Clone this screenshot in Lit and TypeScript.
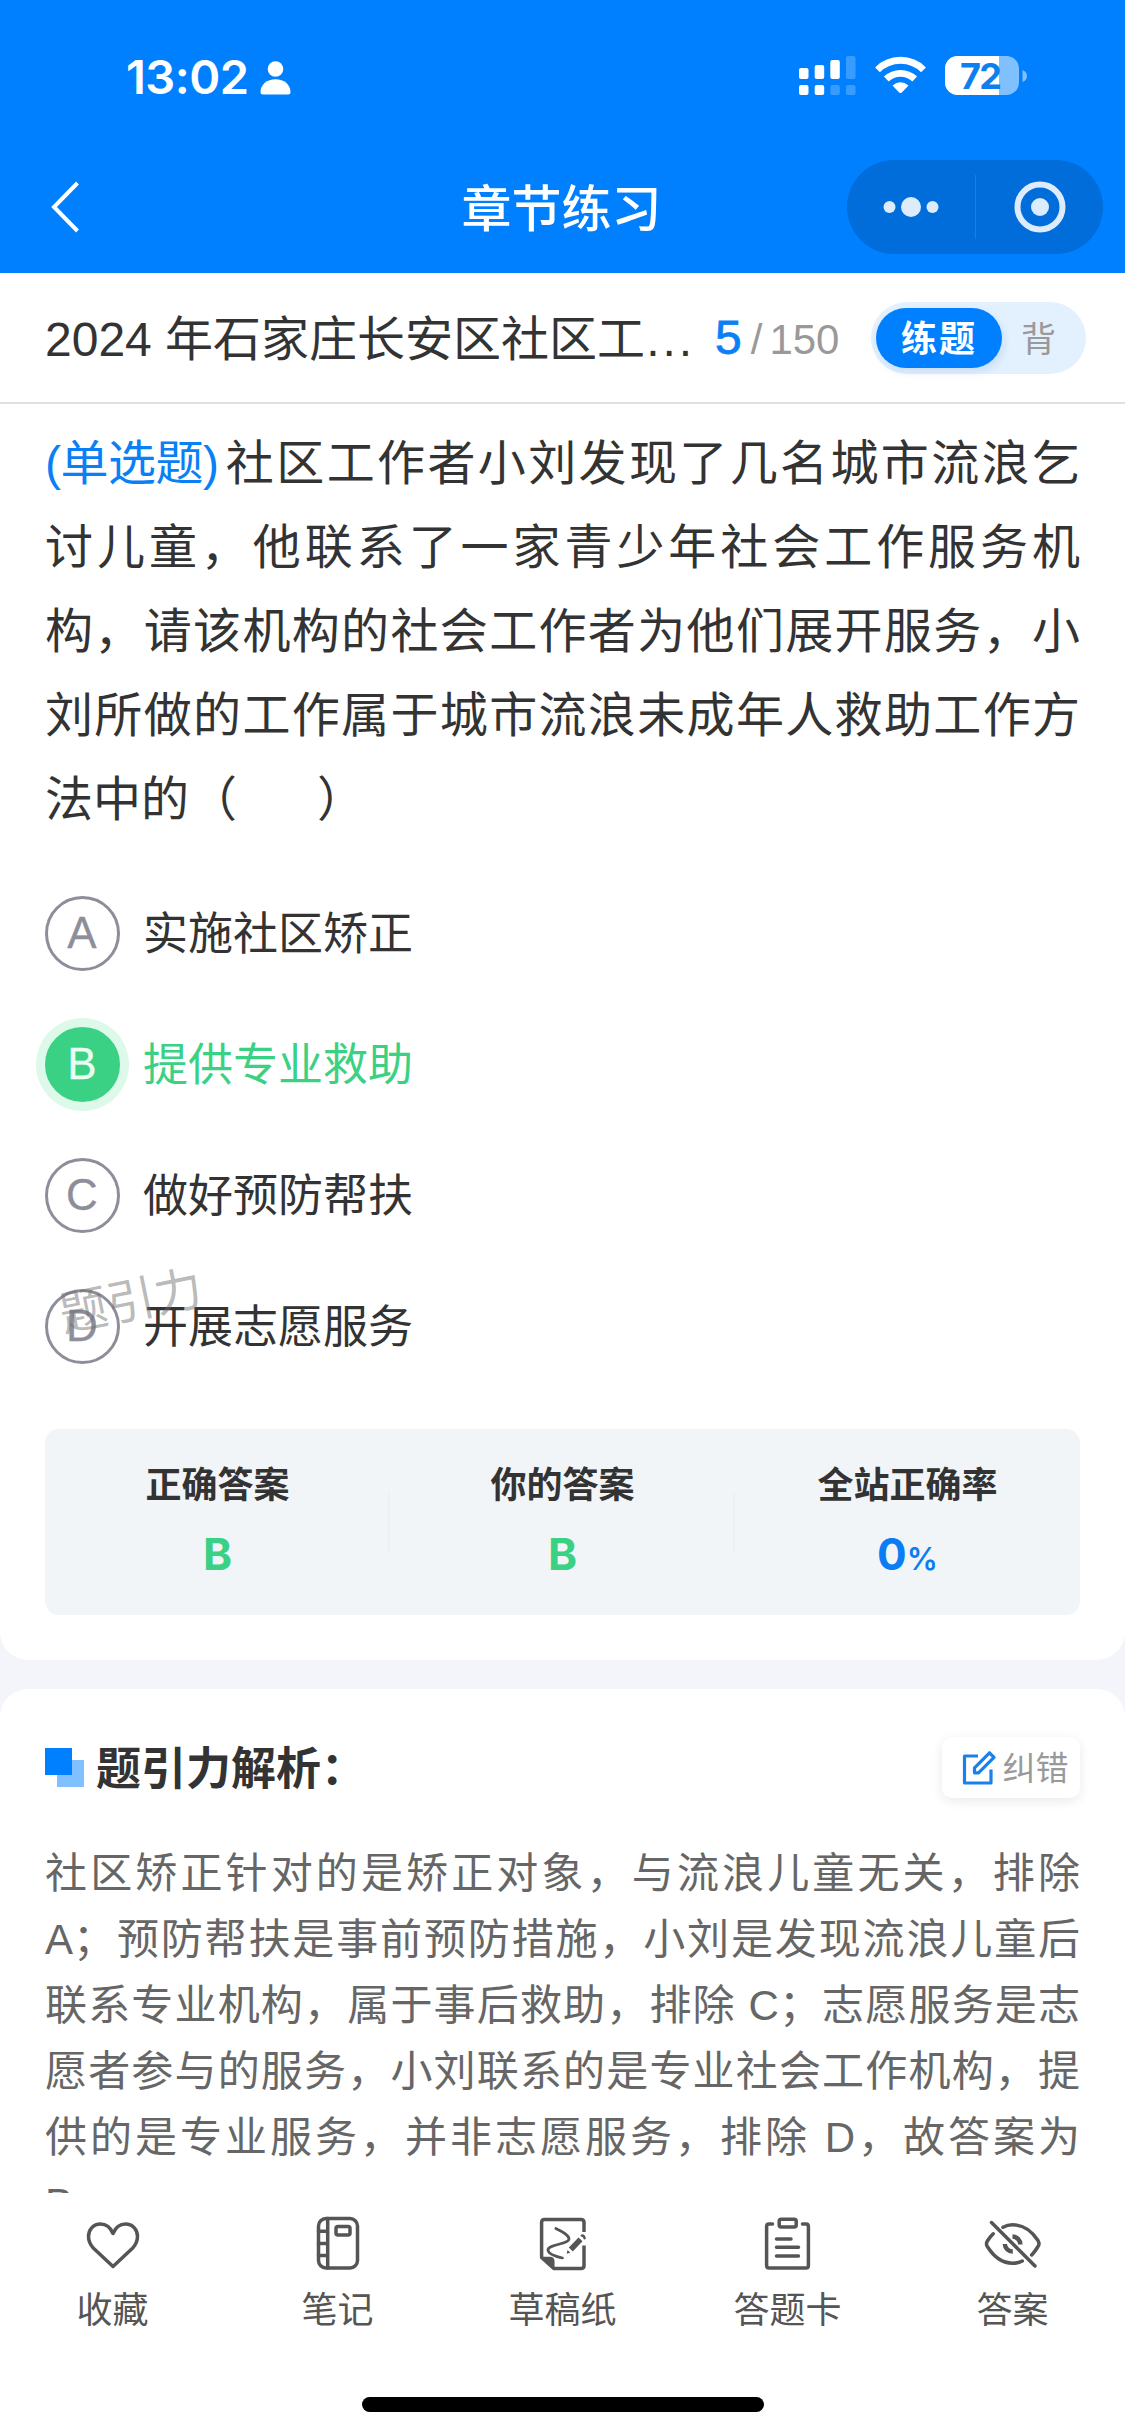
import { LitElement, html, css, svg } from "lit";
import { customElement, property } from "lit/decorators.js";
import { classMap } from "lit/directives/class-map.js";

const STEM_LINES = [
  "社区工作者小刘发现了几名城市流浪乞",
  "讨儿童，他联系了一家青少年社会工作服务机",
  "构，请该机构的社会工作者为他们展开服务，小",
  "刘所做的工作属于城市流浪未成年人救助工作方",
  "法中的（\u00a0\u00a0\u00a0\u00a0\u00a0\u00a0）",
];

const OPTIONS = [
  { key: "A", text: "实施社区矫正" },
  { key: "B", text: "提供专业救助", picked: true },
  { key: "C", text: "做好预防帮扶" },
  { key: "D", text: "开展志愿服务" },
];

const ANALYSIS_LINES = [
  "社区矫正针对的是矫正对象，与流浪儿童无关，排除",
  "A；预防帮扶是事前预防措施，小刘是发现流浪儿童后",
  "联系专业机构，属于事后救助，排除 C；志愿服务是志",
  "愿者参与的服务，小刘联系的是专业社会工作机构，提",
  "供的是专业服务，并非志愿服务，排除 D，故答案为",
  "B。",
];

const ICONS = {
  heart: svg`<path d="M30 19.5C27.5 13.5 23 10 17.5 10C10.5 10 5.5 15.5 5.5 22.5C5.5 27.5 7.5 31 10.5 34.3L30 52.5L49.5 34.3C52.5 31 54.5 27.5 54.5 22.5C54.5 15.5 49.5 10 42.5 10C37 10 32.5 13.5 30 19.5Z"/>`,
  note: svg`<rect x="10.5" y="4.5" width="39" height="49.5" rx="7.5"/><path d="M19.7 4.5V54M10.5 17.2H19.7M10.5 29.5H19.7M10.5 41.5H19.7"/><rect x="28" y="12.500" width="14" height="8.500" rx="2"/>`,
  draft: svg`<path class="flat" d="M51 18V8.500Q51 5.500 48 5.500H11.500Q8.600 5.500 8.600 8.500V43.500L20.800 54.500H48Q51 54.500 51 51.500V31.500"/><path class="solid" d="M8.600 43.500H17Q20.800 43.500 20.800 47.500V54.500Z"/><path class="thin" d="M22.800 14.500C29 17.500 36 21 36 25C36 30 15 30.500 15 36C15 39.500 23 42.500 29.500 44"/><path class="pen" d="M37.800 35.500L47.500 25.300"/><path class="fill" d="M33.700 39.800L34.500 36L37.300 38.700Z"/><path class="cap" d="M48.800 21.600Q51 21.300 51.600 24.200"/>`,
  card: svg`<path d="M14.500 10H11Q8.600 10 8.600 12.500V51.500Q8.600 54 11 54H48Q50.400 54 50.400 51.500V12.500Q50.400 10 48 10H44.500"/><rect x="21.200" y="5.200" width="17" height="7.800" rx="2"/><path d="M18.500 25H33M18.500 33.300H40.500M18.500 42H40.500"/>`,
  eye: svg`<path d="M8.500 8.500L52 52M20 13.300Q24.500 10.800 29.500 10.800C43 10.800 50 19 55 26.500Q57 30 55 32.500Q52 37.500 48.700 41M10.200 19.800Q7 23 4.500 26.800Q2.500 30 4.500 32.800C10 41.500 17.500 49.200 29.500 49.200Q35 49.200 39.300 47"/><path class="pupil" d="M29.500 22.500A8 8 0 0 1 37.300 30.500M21.800 30A8 8 0 0 0 29.800 37.600"/>`,
};

const TOOLS: { icon: keyof typeof ICONS; label: string }[] = [
  { icon: "heart", label: "收藏" },
  { icon: "note", label: "笔记" },
  { icon: "draft", label: "草稿纸" },
  { icon: "card", label: "答题卡" },
  { icon: "eye", label: "答案" },
];

@customElement("status-bar")
class StatusBar extends LitElement {
  static styles = css`
    :host { display: flex; justify-content: space-between; height: 111px; padding: 39px 96px 0 127px; box-sizing: border-box; color: #fff; }
    .left { display: flex; align-items: center; gap: 11px; height: 76px; }
    .time { font: 600 47px/76px Inter, sans-serif; letter-spacing: -0.5px; margin-left: -1px; }
    .icons { display: block; margin-top: 14px; }
    .person { margin-top: 1px; }
    .level { font: 700 36px Inter, sans-serif; fill: #0d80ee; }
  `;
  render() {
    return html`
      <div class="left">
        <span class="time">13:02</span>
        <svg class="person" width="31" height="34" viewBox="0 0 31 34" fill="#fff">
          <circle cx="15.5" cy="8" r="7.8" />
          <path d="M0.5 31C0.5 23.500 7 18.200 15.500 18.200S30.500 23.500 30.500 31Q30.500 33.500 28 33.500H3Q0.500 33.500 0.500 31Z" />
        </svg>
      </div>
      <svg class="icons" width="230" height="48" viewBox="0 0 230 48" fill="#fff">
        <rect x="0" y="15" width="9.500" height="11" rx="2" />
        <rect x="15.700" y="12" width="9.500" height="14" rx="2" />
        <rect x="31.300" y="7" width="9.500" height="19" rx="2" />
        <g opacity="0.22">
          <rect x="47" y="3" width="9.500" height="23" rx="2" />
          <rect x="31.300" y="32" width="9.500" height="10" rx="2" />
          <rect x="47" y="32" width="9.500" height="10" rx="2" />
        </g>
        <rect x="0" y="32" width="9.500" height="10" rx="2" />
        <rect x="15.700" y="32" width="9.500" height="10" rx="2" />
        <g fill="none" stroke="#fff" stroke-width="6.800">
          <path d="M78.500 16.800A32.500 32.500 0 0 1 124.500 16.800" />
          <path d="M87.300 26A20.500 20.500 0 0 1 115.700 26" />
        </g>
        <path d="M93.500 32.600Q101.500 25.800 109.500 32.600L102.800 39.400Q101.500 40.500 100.200 39.400Z" />
        <rect x="146" y="3" width="74" height="39" rx="12.500" opacity="0.5" />
        <path d="M158.500 3H200V42H158.500A12.500 12.500 0 0 1 146 29.500V15.500A12.500 12.500 0 0 1 158.500 3Z" />
        <path d="M223.500 17Q228 19 228 23T223.500 29Z" opacity="0.5" />
        <text class="level" x="161" y="35.500" textLength="42">72</text>
      </svg>
    `;
  }
}

@customElement("nav-bar")
class NavBar extends LitElement {
  @property() heading = "";
  static styles = css`
    :host { display: grid; grid-template-columns: 278px 1fr 278px; align-items: center; height: 162px; padding: 49px 0 19px; box-sizing: border-box; color: #fff; }
    .back { display: block; margin-left: 47px; }
    .title { text-align: center; font: 500 50px/70px "Noto Sans CJK SC", sans-serif; margin-left: -2px; margin-bottom: 4px; }
    .capsule { display: grid; grid-template-columns: 1fr 1px 1fr; align-items: center; justify-items: center; width: 256px; height: 94px; border-radius: 47px; background: #006dda; }
    .rule { width: 1px; height: 64px; background: #1b7ee0; }
    .ring { margin-left: 2px; }
  `;
  render() {
    return html`
      <svg class="back" width="36" height="56" viewBox="0 0 36 56" fill="none" stroke="#fff" stroke-width="4"><path d="M30.500 4L7 28L30.500 52" /></svg>
      <div class="title">${this.heading}</div>
      <div class="capsule">
        <svg width="60" height="24" viewBox="0 0 60 24" fill="#dcecfc"><circle cx="8.500" cy="12" r="6" /><circle cx="30" cy="12" r="10" /><circle cx="51.500" cy="12" r="6" /></svg>
        <span class="rule"></span>
        <svg class="ring" width="54" height="54" viewBox="0 0 54 54"><circle cx="27" cy="27" r="22.500" fill="none" stroke="#dcecfc" stroke-width="6" /><circle cx="27" cy="27" r="9" fill="#dcecfc" /></svg>
      </div>
    `;
  }
}

@customElement("paper-bar")
class PaperBar extends LitElement {
  static styles = css`
    :host { display: flex; align-items: center; height: 131px; padding: 0 39px 0 45px; box-sizing: border-box; background: #fff; border-bottom: 2px solid #dfe0e4; font-family: "Liberation Sans", "Noto Sans CJK SC", sans-serif; }
    .name { width: 650px; flex: none; padding-top: 4px; color: #333; font-size: 48px; line-height: 70px; white-space: nowrap; }
    .more { letter-spacing: 3px; margin-left: 1px; }
    .count { display: flex; align-items: baseline; width: 151px; margin-left: 20px; padding-top: 2px; color: #999; font-size: 42px; line-height: 60px; white-space: nowrap; }
    .now { color: #0a80f5; font: 400 48px/60px "Liberation Sans", sans-serif; -webkit-text-stroke: 0.800px #0a80f5; }
    .slash { margin: 0 7px 0 9px; }
    .switch { display: flex; align-items: center; width: 215px; height: 72px; margin-left: 5px; padding: 0 5px; box-sizing: border-box; border-radius: 36px; background: #e3f1ff; font: 400 35px/60px "Noto Sans CJK SC", sans-serif; }
    .on { width: 126px; height: 60px; border-radius: 30px; background: #0080ff; color: #fff; font-weight: 700; font-size: 36px; line-height: 57px; letter-spacing: 2px; text-align: center; box-shadow: 2px 4px 8px rgba(0, 80, 180, 0.12); }
    .off { margin-left: 19px; color: #999; line-height: 58px; height: 60px; }
  `;
  render() {
    return html`
      <div class="name">2024 年石家庄长安区社区工<span class="more">...</span></div>
      <div class="count"><span class="now">5</span><span class="slash">/</span><span>150</span></div>
      <div class="switch"><span class="on">练题</span><span class="off">背</span></div>
    `;
  }
}

@customElement("question-card")
class QuestionCard extends LitElement {
  static styles = css`
    :host { display: block; position: relative; height: 1256px; padding: 18px 45px 0; box-sizing: border-box; background: #fff; border-radius: 0 0 28px 28px; color: #333; font-family: "Liberation Sans", "Noto Sans CJK SC", sans-serif; }
    .line { height: 84px; font-size: 48px; line-height: 84px; white-space: nowrap; text-align: justify; text-align-last: justify; }
    .line.last { text-align: left; text-align-last: left; }
    .kind { display: inline-block; color: #0a80f5; text-align-last: left; letter-spacing: -0.500px; margin-right: 5px; }
    .options { display: grid; gap: 57px; padding-top: 54px; }
    .option { display: flex; align-items: center; gap: 23px; height: 74px; font-size: 45px; line-height: 74px; }
    .text { padding-top: 3px; }
    .badge { width: 75px; height: 75px; flex: none; border: 3px solid #8e8d9a; border-radius: 50%; box-sizing: border-box; color: #8e8d9a; font-size: 44px; line-height: 68px; text-align: center; text-indent: -1px; -webkit-text-stroke: 0.300px currentColor; }
    .picked { color: #3ad184; }
    .picked .badge { border-color: #3ad184; background: #3ad184; color: #e8fff2; box-shadow: 0 0 0 9px #ddf9ea; }
    .mark { position: absolute; left: 58px; top: 863px; width: 146px; color: rgba(110, 110, 110, 0.48); font-size: 48px; line-height: 70px; transform: rotate(-11.500deg); text-align: center; white-space: nowrap; }
    .stats { display: grid; grid-template-columns: repeat(3, 1fr); height: 186px; margin-top: 66px; border-radius: 14px; background: #f2f5f8; text-align: center; align-items: center; }
    .stat { height: 186px; padding-top: 26px; box-sizing: border-box; }
    .stat + .stat { background: linear-gradient(#edf1f4, #edf1f4) left center / 2px 60px no-repeat; margin-left: -2px; padding-left: 2px; }
    .label { font: 700 36px/54px "Noto Sans CJK SC", sans-serif; }
    .value { margin-top: 15px; font: 700 44px/60px Inter, sans-serif; color: #3ad184; }
    .rate { color: #0a7df5; }
    .unit { font-size: 31px; font-weight: 600; }
  `;
  render() {
    return html`
      <div>
        ${STEM_LINES.map((text, i) => html`<div class=${classMap({ line: true, last: i === STEM_LINES.length - 1 })}>${i === 0 ? html`<span class="kind">(单选题)</span>` : ""}${text}</div>`)}
      </div>
      <div class="options">
        ${OPTIONS.map((o) => html`<div class=${classMap({ option: true, picked: !!o.picked })}><span class="badge">${o.key}</span><span class="text">${o.text}</span></div>`)}
      </div>
      <div class="mark">题引力</div>
      <div class="stats">
        <div class="stat"><div class="label">正确答案</div><div class="value">B</div></div>
        <div class="stat"><div class="label">你的答案</div><div class="value">B</div></div>
        <div class="stat"><div class="label">全站正确率</div><div class="value rate">0<span class="unit">%</span></div></div>
      </div>
    `;
  }
}

@customElement("analysis-card")
class AnalysisCard extends LitElement {
  static styles = css`
    :host { display: block; flex: none; height: 700px; margin-top: 29px; padding: 48px 45px 0; box-sizing: border-box; background: #fff; border-radius: 28px 28px 0 0; font-family: "Liberation Sans", "Noto Sans CJK SC", sans-serif; }
    .head { display: flex; align-items: center; height: 61px; }
    .title { margin-left: 12px; flex: 1; height: 64px; color: #333; font: 700 45px/60px "Noto Sans CJK SC", sans-serif; }
    .fix { display: flex; align-items: center; justify-content: center; gap: 7px; width: 138px; height: 61px; padding-left: 8px; box-sizing: border-box; border-radius: 10px; background: #fff; box-shadow: 0 3px 12px rgba(0, 0, 0, 0.09); color: #999; font: 400 33px/57px "Noto Sans CJK SC", sans-serif; }
    .fix span { height: 60px; }
    .body { padding-top: 43px; color: #666; font-size: 42px; }
    .line { height: 66px; line-height: 66px; white-space: nowrap; text-align: justify; text-align-last: justify; }
    .line:last-child { text-align-last: left; }
  `;
  render() {
    return html`
      <div class="head">
        <svg width="39" height="39" viewBox="0 0 39 39"><rect x="12" y="12" width="27" height="27" fill="#80c0ff" /><rect width="27" height="27" fill="#0080ff" /></svg>
        <div class="title">题引力解析：</div>
        <div class="fix">
          <svg width="34" height="36" viewBox="0 0 34 36" fill="none" stroke="#1a80ec" stroke-width="3.200" stroke-linejoin="round"><path d="M16 6H2.500V33H29V19.500M12.500 22.800V17.800L27.500 2.800L32 7.300L16.500 22.800Z" /></svg>
          <span>纠错</span>
        </div>
      </div>
      <div class="body">${ANALYSIS_LINES.map((t) => html`<div class="line">${t}</div>`)}</div>
    `;
  }
}

@customElement("tool-bar")
class ToolBar extends LitElement {
  static styles = css`
    :host { display: flex; flex-direction: column; align-items: center; height: 243px; padding-top: 21px; box-sizing: border-box; background: #fff; }
    .tools { display: grid; grid-template-columns: repeat(5, 225px); height: 183px; }
    .tool { display: flex; flex-direction: column; align-items: center; gap: 9px; color: #555; font: 400 36px/48px "Noto Sans CJK SC", sans-serif; }
    .icon { display: block; fill: none; stroke: #555; stroke-width: 3.500; stroke-linecap: round; stroke-linejoin: round; }
    .flat { stroke-linecap: butt; }
    .solid { fill: #555; stroke-width: 1.500; }
    .fill { fill: #555; stroke: none; }
    .thin { stroke-width: 2.700; }
    .cap { stroke-width: 2.400; }
    .pen { stroke-width: 5.500; stroke-linecap: butt; }
    .pupil { stroke-width: 4.500; stroke-linecap: butt; }
    .home { width: 402px; height: 15px; border-radius: 8px; background: #000; }
  `;
  render() {
    return html`
      <div class="tools">
        ${TOOLS.map((t) => html`<div class="tool"><svg class="icon" width="60" height="60" viewBox="0 0 60 60">${ICONS[t.icon]}</svg><span>${t.label}</span></div>`)}
      </div>
      <div class="home"></div>
    `;
  }
}

@customElement("app-root")
class AppRoot extends LitElement {
  static styles = css`
    :host { display: flex; flex-direction: column; width: 1125px; height: 2436px; overflow: hidden; background: #fff; }
    .top { flex: none; height: 273px; background: #0080ff; }
    .scroll { flex: 1; min-height: 0; overflow: hidden; background: #f3f5fa; }
  `;
  render() {
    return html`
      <header class="top"><status-bar></status-bar><nav-bar heading="章节练习"></nav-bar></header>
      <paper-bar></paper-bar>
      <main class="scroll"><question-card></question-card><analysis-card></analysis-card></main>
      <tool-bar></tool-bar>
    `;
  }
}
